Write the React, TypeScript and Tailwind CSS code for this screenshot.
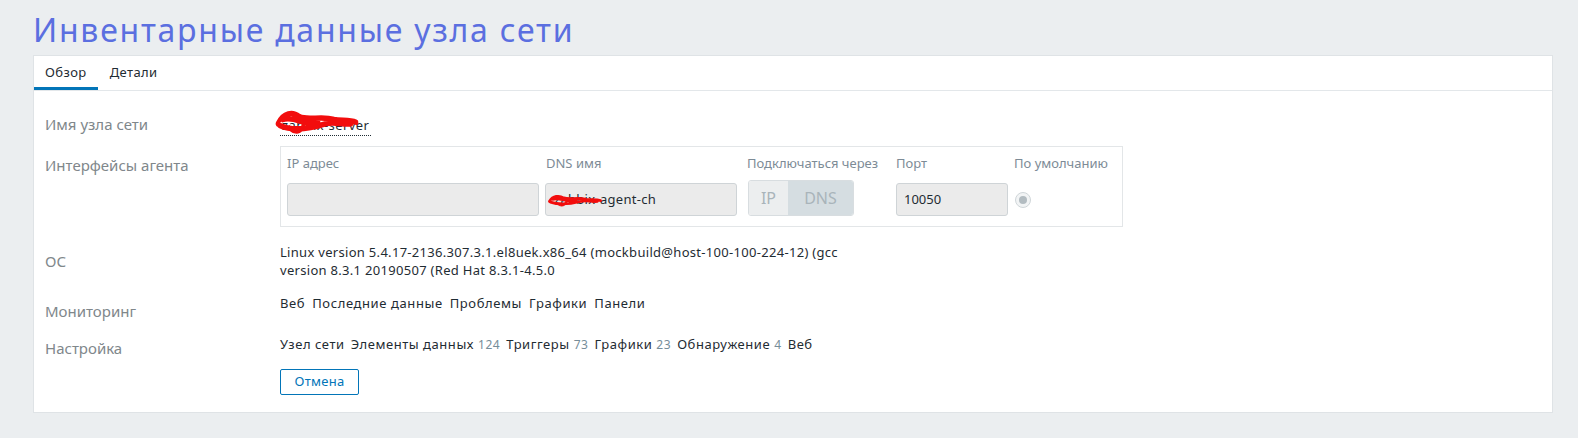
import React from 'react';

const font = { fontFamily: '"Noto Sans", "Open Sans", sans-serif' };

function Scribble({ className }: { className: string }) {
  return (
    <svg className={className} viewBox="0 0 100 20" preserveAspectRatio="none">
      <path
        d="M4 12 C10 4, 22 3, 30 7 C40 10, 55 6, 70 9 C78 10, 88 9, 96 11 M6 13 C20 17, 40 16, 60 12 C70 10, 80 13, 90 12 M10 9 C24 6, 36 14, 52 11 M18 15 C24 18, 30 18, 34 14"
        fill="none"
        stroke="#f20d0d"
        strokeWidth="4"
        strokeLinecap="round"
      />
    </svg>
  );
}

function Row({ label, labelClass, children, className }: { label: string; labelClass?: string; children: React.ReactNode; className?: string }) {
  return (
    <div className={`flex ${className ?? ''}`}>
      <div className={`w-[235px] shrink-0 text-[15px] text-[#80878b] ${labelClass ?? ''}`}>{label}</div>
      <div className="flex-1">{children}</div>
    </div>
  );
}

export default function App() {
  const monitoring = ['Веб', 'Последние данные', 'Проблемы', 'Графики', 'Панели'];
  const config: { name: string; count?: number }[] = [
    { name: 'Узел сети' },
    { name: 'Элементы данных', count: 124 },
    { name: 'Триггеры', count: 73 },
    { name: 'Графики', count: 23 },
    { name: 'Обнаружение', count: 4 },
    { name: 'Веб' },
  ];

  return (
    <div className="min-h-[438px] bg-[#ebeef0] pl-[33px] pr-[25px] pb-[25px]" style={font}>
      <h1 className="pt-[10px] h-[55px] text-[32px] leading-[40px] text-[#5b6fe0] tracking-[1.75px]">
        Инвентарные данные узла сети
      </h1>

      <div className="bg-white border border-[#dfe3e6] h-[358px]">
        {/* tabs */}
        <div className="flex h-[35px] border-b border-[#e3e7ea] text-[13px] tracking-[0.4px] text-[#1f2c33]">
          <div className="px-[11px] flex items-center border-b-[3px] border-[#0275b8] pt-[3px]">Обзор</div>
          <div className="px-[12px] flex items-center pt-[3px] border-b-[3px] border-transparent">Детали</div>
        </div>

        <div className="pl-[11px] pt-[21px]">
          <Row label="Имя узла сети" className="h-[34px] items-start" labelClass="pt-[1px]">
            <div className="relative inline-block text-[13px] tracking-[0.4px] text-[#1f2c33] leading-[20px] border-b border-dotted border-[#1f2c33] pl-[2px] pr-[2px]">
              zabbix-server
              <Scribble className="absolute left-[-6px] top-[-8px] w-[86px] h-[28px]" />
            </div>
          </Row>

          <Row label="Интерфейсы агента" labelClass="pt-[8px]">
            <div className="w-[843px] h-[81px] border border-[#e3e6e8] px-[6px] pt-[5px]">
              <div className="flex text-[13px] text-[#7d8b96] h-[24px] items-center">
                <div className="w-[259px]">IP адрес</div>
                <div className="w-[201px]">DNS имя</div>
                <div className="w-[149px] whitespace-nowrap">Подключаться через</div>
                <div className="w-[118px]">Порт</div>
                <div>По умолчанию</div>
              </div>
              <div className="flex items-center mt-[7px]">
                <div className="w-[252px] h-[33px] bg-[#ebebeb] border border-[#cfd4d7] rounded-[3px]" />
                <div className="relative ml-[6px] w-[192px] h-[33px] bg-[#ebebeb] border border-[#cfd4d7] rounded-[3px] text-[13px] tracking-[0.3px] text-[#1f2c33] flex items-center pl-[8px]">
                  zabbix-agent-ch
                  <Scribble className="absolute left-[1px] top-[9px] w-[56px] h-[14px]" />
                </div>
                <div className="ml-[11px] flex h-[36px] -mt-[3px] rounded-[3px] border border-[#d8dde0] overflow-hidden text-[16px] text-[#a9b4ba]">
                  <div className="w-[39px] bg-[#eceeef] flex items-center justify-center">IP</div>
                  <div className="w-[65px] bg-[#d5dde1] flex items-center justify-center">DNS</div>
                </div>
                <div className="ml-[42px] w-[112px] h-[33px] bg-[#ebebeb] border border-[#cfd4d7] rounded-[3px] text-[13px] text-[#1f2c33] flex items-center pl-[7px]">
                  10050
                </div>
                <div className="ml-[7px] w-[16px] h-[16px] rounded-full border border-[#d0d6d9] bg-[#f2f4f5] flex items-center justify-center">
                  <div className="w-[8px] h-[8px] rounded-full bg-[#b3bcc1]" />
                </div>
              </div>
            </div>
          </Row>

          <Row label="ОС" className="mt-[16px] items-center">
            <div className="text-[13px] leading-[18px] tracking-[0.3px] text-[#1f2c33] w-[590px]">
              Linux version 5.4.17-2136.307.3.1.el8uek.x86_64 (mockbuild@host-100-100-224-12) (gcc version 8.3.1 20190507 (Red Hat 8.3.1-4.5.0
            </div>
          </Row>

          <Row label="Мониторинг" className="mt-[15px] items-start" labelClass="pt-[6px]">
            <div className="flex gap-[7px] text-[13px] tracking-[0.6px] text-[#1f2c33] leading-[18px]">
              {monitoring.map((m) => (
                <span key={m}>{m}</span>
              ))}
            </div>
          </Row>

          <Row label="Настройка" className="mt-[12px] items-start" labelClass="pt-[2px]">
            <div className="flex gap-[6px] text-[13px] tracking-[0.55px] text-[#1f2c33] leading-[18px]">
              {config.map((c) => (
                <span key={c.name}>
                  {c.name}
                  {c.count !== undefined && <span className="text-[12px] text-[#768d99] ml-[4px]">{c.count}</span>}
                </span>
              ))}
            </div>
            <button className="mt-[15px] h-[26px] w-[79px] border border-[#0275b8] rounded-[2px] text-[13px] tracking-[0.3px] text-[#0275b8] bg-white">
              Отмена
            </button>
          </Row>
        </div>
      </div>
    </div>
  );
}
